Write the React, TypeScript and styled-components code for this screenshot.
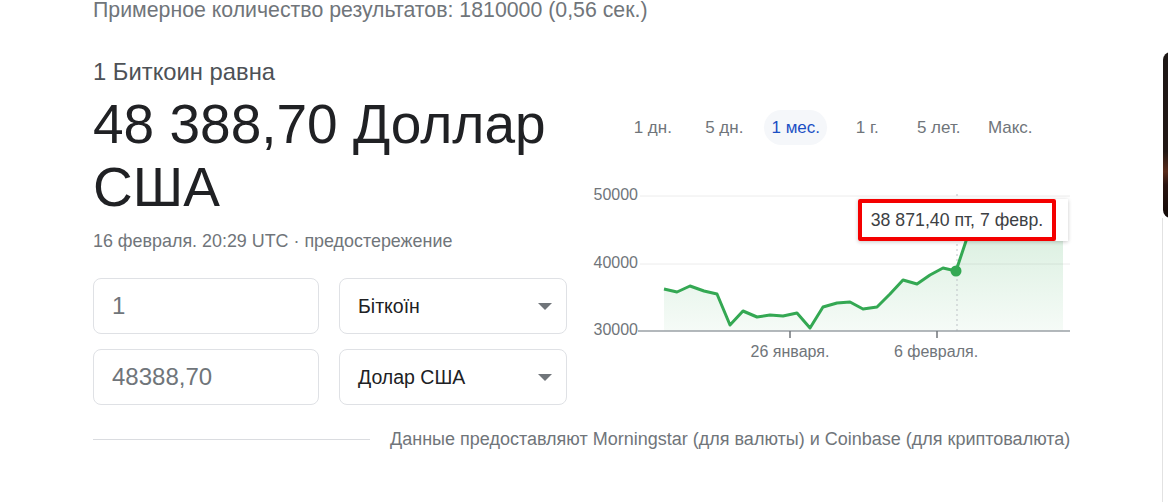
import React from "react";
import styled, { createGlobalStyle } from "styled-components";

const GlobalStyle = createGlobalStyle`
  html, body { margin: 0; padding: 0; background: #fff; overflow: hidden; }
  body { font-family: "Liberation Sans", Arial, sans-serif; color: #202124; }
`;

const Page = styled.div`
  display: flex;
  width: 1168px;
  height: 502px;
  padding-left: 93px;
  box-sizing: border-box;
`;

const Main = styled.div`
  width: 977px;
  flex: none;
  display: flex;
  flex-direction: column;
`;

const Side = styled.div`
  margin-left: 92px;
  padding-top: 52px;
  flex: none;
  display: flex;
  flex-direction: column;
`;

const Thumb = styled.div`
  margin-left: 1px;
  width: 60px;
  height: 166px;
  flex: none;
  border-radius: 8px 0 0 8px;
  background: linear-gradient(180deg, #1d1716 0%, #221815 60%, #5a2c1c 72%, #2a1410 80%, #120a08 100%);
`;

const SideRule = styled.div`
  width: 1px;
  flex: 1;
  background: #e2e2e2;
`;

const Stats = styled.div`
  font-size: 21.3px;
  line-height: 20px;
  color: #70757a;
`;

const Card = styled.div`
  display: flex;
  flex-direction: column;
  margin-top: 38px;
`;

const TopRow = styled.div`
  display: flex;
  gap: 12px;
`;

const LeftCol = styled.div`
  width: 475px;
  flex: none;
  display: flex;
  flex-direction: column;
`;

const Lead = styled.div`
  font-size: 23.8px;
  line-height: 28px;
  color: #4d5156;
`;

const Big = styled.div`
  font-size: 55px;
  line-height: 63px;
  color: #202124;
  margin-top: 7px;
`;

const Stamp = styled.div`
  font-size: 17.9px;
  line-height: 22px;
  color: #70757a;
  margin-top: 11px;
`;

const Converter = styled.div`
  display: grid;
  grid-template-columns: 226px 228px;
  column-gap: 20px;
  row-gap: 15px;
  margin-top: 26px;
`;

const Field = styled.div`
  height: 56px;
  box-sizing: border-box;
  border: 1px solid #dfe1e5;
  border-radius: 8px;
  display: flex;
  align-items: center;
  padding: 0 14px 0 18px;
`;

const Amount = styled.span`
  font-size: 24px;
  color: #70757a;
`;

const Unit = styled.span`
  flex: 1;
  font-size: 19.5px;
  color: #202124;
`;

const Caret = styled.span`
  width: 0;
  height: 0;
  border-left: 7px solid transparent;
  border-right: 7px solid transparent;
  border-top: 7px solid #70757a;
`;

const RightCol = styled.div`
  width: 500px;
  flex: none;
  display: flex;
  flex-direction: column;
`;

const Tabs = styled.div`
  display: grid;
  grid-template-columns: repeat(6, 71.5px);
  margin-left: 37px;
  margin-top: 52px;
`;

const Tab = styled.div<{ $active?: boolean }>`
  justify-self: center;
  height: 35px;
  display: flex;
  align-items: center;
  padding: 0 7px;
  border-radius: 18px;
  font-size: 17px;
  color: ${(p) => (p.$active ? "#1a4fc4" : "#70757a")};
  background: ${(p) => (p.$active ? "#f5f7fa" : "transparent")};
`;

const ChartWrap = styled.div`
  position: relative;
  margin-top: 35px;
  height: 185px;
`;

const Tooltip = styled.div`
  position: absolute;
  left: 278px;
  top: 19px;
  width: 210px;
  height: 42px;
  background: #fff;
  box-shadow: 0 1px 4px rgba(0, 0, 0, 0.22);
`;

const RedFrame = styled.div`
  width: 198px;
  height: 42px;
  box-sizing: border-box;
  border: 4px solid #f40000;
  border-radius: 2px;
  display: flex;
  align-items: center;
  justify-content: center;
  font-size: 17.7px;
  color: #3c4043;
  white-space: nowrap;
`;

const Footer = styled.div`
  display: flex;
  align-items: center;
  margin-top: 24px;
  height: 20px;
`;

const Rule = styled.div`
  width: 277px;
  height: 1px;
  background: #dadce0;
  flex: none;
`;

const Source = styled.div`
  margin-left: 20px;
  font-size: 18px;
  color: #70757a;
  white-space: nowrap;
`;

const pts: [number, number][] = [
  [84, 109], [97, 112], [110, 106], [124, 111], [137, 114], [150, 145],
  [163, 131], [177, 137], [190, 135], [203, 136], [217, 133], [230, 148],
  [243, 127], [257, 123], [270, 122], [283, 129], [297, 127], [310, 114],
  [323, 100], [337, 104], [350, 95], [363, 88], [376, 91], [387, 58],
  [395, 35], [410, 30], [430, 27], [450, 30], [470, 25], [483, 27],
];

const linePath = pts.map((p, i) => `${i ? "L" : "M"}${p[0]} ${p[1]}`).join(" ");
const areaPath = `${linePath} L483 151 L84 151 Z`;

const Chart = () => (
  <svg width="500" height="185" viewBox="0 0 500 185">
    <defs>
      <linearGradient id="fillG" x1="0" y1="20" x2="0" y2="155" gradientUnits="userSpaceOnUse">
        <stop offset="0" stopColor="#34a853" stopOpacity="0.22" />
        <stop offset="1" stopColor="#34a853" stopOpacity="0.04" />
      </linearGradient>
    </defs>
    <g fontFamily="Liberation Sans, Arial, sans-serif" fontSize="16" fill="#70757a">
      <text x="58" y="16" textAnchor="end" dominantBaseline="middle">50000</text>
      <text x="58" y="84" textAnchor="end" dominantBaseline="middle">40000</text>
      <text x="58" y="151" textAnchor="end" dominantBaseline="middle">30000</text>
      <text x="210" y="173" textAnchor="middle" dominantBaseline="middle">26 января.</text>
      <text x="356" y="173" textAnchor="middle" dominantBaseline="middle">6 февраля.</text>
    </g>
    <line x1="60" y1="16" x2="490" y2="16" stroke="#ececec" />
    <line x1="60" y1="84" x2="490" y2="84" stroke="#ececec" />
    <path d={areaPath} fill="url(#fillG)" />
    <line x1="377" y1="14" x2="377" y2="151" stroke="#bdc1c6" strokeDasharray="2 3" />
    <line x1="58" y1="151" x2="490" y2="151" stroke="#9aa0a6" strokeWidth="1.5" />
    <line x1="210" y1="151" x2="210" y2="158" stroke="#70757a" strokeWidth="1.5" />
    <line x1="357" y1="151" x2="357" y2="158" stroke="#70757a" strokeWidth="1.5" />
    <path d={linePath} fill="none" stroke="#34a853" strokeWidth="3" strokeLinejoin="round" />
    <circle cx="376" cy="91" r="5.5" fill="#34a853" />
  </svg>
);

export default function App() {
  return (
    <>
      <GlobalStyle />
      <Page>
        <Main>
          <Stats>Примерное количество результатов: 1810000 (0,56 сек.)</Stats>
          <Card>
            <TopRow>
              <LeftCol>
                <Lead>1 Биткоин равна</Lead>
                <Big>48 388,70 Доллар США</Big>
                <Stamp>16 февраля. 20:29 UTC · предостережение</Stamp>
                <Converter>
                  <Field><Amount>1</Amount></Field>
                  <Field><Unit>Біткоїн</Unit><Caret /></Field>
                  <Field><Amount>48388,70</Amount></Field>
                  <Field><Unit>Долар США</Unit><Caret /></Field>
                </Converter>
              </LeftCol>
              <RightCol>
                <Tabs>
                  <Tab>1 дн.</Tab>
                  <Tab>5 дн.</Tab>
                  <Tab $active>1 мес.</Tab>
                  <Tab>1 г.</Tab>
                  <Tab>5 лет.</Tab>
                  <Tab>Макс.</Tab>
                </Tabs>
                <ChartWrap>
                  <Chart />
                  <Tooltip>
                    <RedFrame>38 871,40 пт, 7 февр.</RedFrame>
                  </Tooltip>
                </ChartWrap>
              </RightCol>
            </TopRow>
            <Footer>
              <Rule />
              <Source>Данные предоставляют Morningstar (для валюты) и Coinbase (для криптовалюта)</Source>
            </Footer>
          </Card>
        </Main>
        <Side>
          <Thumb />
          <SideRule />
        </Side>
      </Page>
    </>
  );
}
